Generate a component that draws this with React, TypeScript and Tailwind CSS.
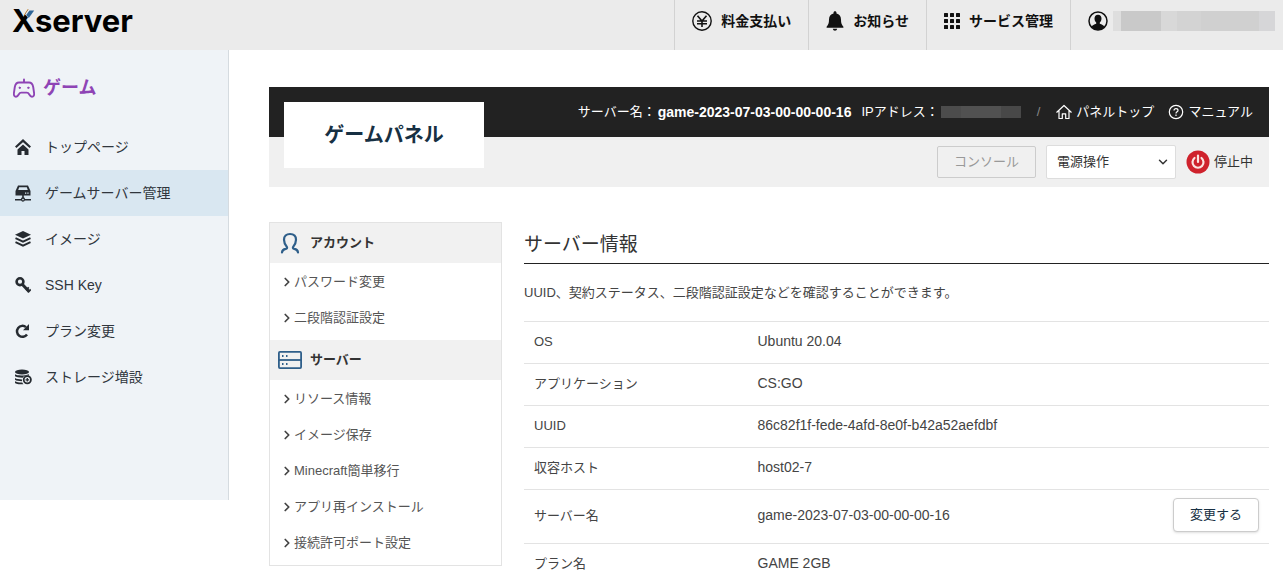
import type { ReactNode } from "react";
import { ChevronDown, ChevronRight } from "lucide-react";
import clsx from "clsx";

/* ---------- icons ---------- */

const YenIcon = () => (
    <svg viewBox="0 0 20 20" className="size-5 shrink-0" fill="none" stroke="currentColor">
        <circle cx="10" cy="10" r="9.2" strokeWidth="1.4" />
        <path d="M5.500 4.800l4.500 5.200 4.500-5.200M10 10v6M5 10h10M5 12.700h10" strokeWidth="1.6" />
    </svg>
);

const BellIcon = () => (
    <svg viewBox="0 0 18 20" className="h-5 w-[18px] shrink-0" fill="currentColor">
        <path d="M9 .3c.9 0 1.500.6 1.500 1.500v.7c2.800.7 4.500 2.900 4.500 6 0 3.800.7 5.300 2.400 7.300v1H.6v-1C2.300 13.800 3 12.300 3 8.500c0-3.100 1.700-5.300 4.500-6v-.7C7.500.9 8.100.3 9 .3z" />
        <path d="M6.800 17.800h4.400c-.2 1.200-1.100 1.900-2.200 1.900s-2-.7-2.200-1.900z" />
    </svg>
);

const GridIcon = () => (
    <svg viewBox="0 0 16 16" className="size-4 shrink-0" fill="currentColor">
        {[0, 6, 12].map((y) =>
            [0, 6, 12].map((x) => <rect key={`${x}-${y}`} x={x} y={y} width="4" height="4" rx="0.5" />)
        )}
    </svg>
);

const UserIcon = () => (
    <svg viewBox="0 0 20 20" className="size-5 shrink-0">
        <circle cx="10" cy="10" r="9" fill="none" stroke="currentColor" strokeWidth="1.5" />
        <path
            d="M10 3.800c2.200 0 3.500 1.500 3.500 3.700 0 1.800-.8 3.300-1.700 4v1.300c2 .7 4 1.300 4.700 3.200A8.700 8.700 0 0110 19a8.700 8.700 0 01-6.500-3c.7-1.900 2.700-2.500 4.700-3.200v-1.300c-.9-.7-1.700-2.200-1.700-4 0-2.200 1.300-3.700 3.500-3.700z"
            fill="currentColor"
        />
    </svg>
);

const GamepadIcon = () => (
    <svg viewBox="0 0 22 20" className="h-5 w-[22px] shrink-0" fill="none" stroke="currentColor" strokeWidth="1.9" strokeLinecap="round" strokeLinejoin="round">
        <path d="M6 4.500h10c2.500 0 3.700 1.800 4.200 4.500l.9 6.200c.3 2-.6 3.500-2.100 3.500-1.200 0-1.900-.7-2.700-2.200-.7-1.300-1.300-1.900-2.500-1.900H8.200c-1.200 0-1.800.6-2.500 1.900-.8 1.500-1.500 2.200-2.700 2.200-1.500 0-2.400-1.500-2.100-3.500L1.800 9C2.300 6.300 3.500 4.500 6 4.500zM11 4.500V1.500" />
        <circle cx="6.700" cy="9.800" r="0.700" fill="currentColor" strokeWidth="1" />
        <circle cx="15.300" cy="9.800" r="0.700" fill="currentColor" strokeWidth="1" />
    </svg>
);

const HomeIcon = () => (
    <svg viewBox="0 0 16 16" className="size-4 shrink-0">
        <path d="M.7 8.300L8 1.600l7.300 6.700" fill="none" stroke="currentColor" strokeWidth="2.2" />
        <path d="M8 5.500l5.500 5V16h-4v-4h-3v4h-4v-5.500z" fill="currentColor" />
    </svg>
);

const NetworkServerIcon = () => (
    <svg viewBox="0 0 16 17" className="h-[17px] w-4 shrink-0">
        <path
            fillRule="evenodd"
            d="M3 .5h10L15.500 6v4.500H.5V6zM4.200 2.300L3.200 5h9.600l-1-2.700zM10 7.500v1.300h1.300V7.500zm2.300 0v1.300h1.300V7.500z"
            fill="currentColor"
        />
        <path d="M8 10v3M0 14.700h6M10 14.700h6" stroke="currentColor" strokeWidth="1.6" />
        <circle cx="8" cy="14.500" r="1.500" fill="none" stroke="currentColor" strokeWidth="1.3" />
    </svg>
);

const LayersIcon = () => (
    <svg viewBox="0 0 16 16" className="size-4 shrink-0">
        <path d="M8 0l8 3.700-8 3.700-8-3.700z" fill="currentColor" />
        <path d="M.5 7.200L8 10.600l7.500-3.400M.5 11.200L8 14.600l7.500-3.400" fill="none" stroke="currentColor" strokeWidth="1.9" />
    </svg>
);

const KeyIcon = () => (
    <svg viewBox="0 0 16 16" className="size-4 shrink-0" fill="none" stroke="currentColor">
        <circle cx="5" cy="4.700" r="3.400" strokeWidth="2.6" />
        <path d="M7.200 7.200l6.800 7.300" strokeWidth="3" />
        <path d="M11 13.200l2.800-2.800M13 15.300l2.800-2.800" strokeWidth="1.8" />
    </svg>
);

const ReloadIcon = () => (
    <svg viewBox="0 0 16 16" className="size-4 shrink-0">
        <path d="M12 11.500A5.500 5.500 0 1111 4.100" fill="none" stroke="currentColor" strokeWidth="2.5" />
        <path d="M14 1v6.300H8z" fill="currentColor" />
    </svg>
);

const StorageIcon = () => (
    <svg viewBox="0 0 17 16" className="h-4 w-[17px] shrink-0">
        <ellipse cx="7" cy="3" rx="7" ry="2.500" fill="currentColor" />
        <path
            d="M0 5.200c2 1.500 9 1.700 14 0v1.500c-3-.5-5.500.5-6.300 2C4 8.700 1 8.200 0 7.300zM0 9c1.500 1 4 1.400 7 1.400v1.800c-3 0-6-.4-7-1.400zM0 12.200c1.500 1 4.500 1.500 7.300 1.400.3.700.7 1.200 1.200 1.700C4.500 15.400.5 15 0 13.700z"
            fill="currentColor"
        />
        <circle cx="12.300" cy="10.800" r="3.600" fill="none" stroke="currentColor" strokeWidth="1.8" />
        <path d="M12.300 9v3.600M10.500 10.800h3.600" stroke="currentColor" strokeWidth="1.3" />
    </svg>
);

const PanelTopIcon = () => (
    <svg viewBox="0 0 16 16" className="size-4 shrink-0" fill="none" stroke="currentColor" strokeWidth="1.2" strokeLinejoin="round">
        <path d="M.8 8.200L8 1.500l7.200 6.700M3 6.500v8h3.300v-4.700h3.400v4.700H13v-8" strokeLinecap="round" />
    </svg>
);

const HelpIcon = () => (
    <svg viewBox="0 0 16 16" className="size-4 shrink-0" fill="none" stroke="currentColor" strokeWidth="1.2">
        <circle cx="8" cy="8" r="6.700" />
        <path d="M6 6.600c0-1.200.8-2 2-2s2 .8 2 1.800c0 1.300-2 1.500-2 3" />
        <path d="M8 10.600v1.300" />
    </svg>
);

const PowerIcon = () => (
    <svg viewBox="0 0 24 24" className="size-6 shrink-0">
        <circle cx="12" cy="12" r="11.500" fill="#cf222c" />
        <path d="M8.500 8a5.500 5.500 0 107 0M12 5.500v6.500" fill="none" stroke="#fbe3e0" strokeWidth="2.2" strokeLinecap="round" />
    </svg>
);

const AccountIcon = () => (
    <svg viewBox="0 0 24 24" className="size-6 shrink-0" fill="none" stroke="#2f5f8a" strokeWidth="2.2" strokeLinecap="round">
        <path d="M4 21.500c.2-2.200 1.500-3.200 3.700-3.600 1.400-.3 1.800-1.100 1-2.200C7.200 13.700 6 11.500 6 8.700 6 5.200 8.300 3 12 3s6 2.200 6 5.700c0 2.800-1.200 5-2.700 7-.8 1.100-.4 1.900 1 2.200 2.200.4 3.500 1.400 3.700 3.600" />
    </svg>
);

const ServerIcon = () => (
    <svg viewBox="0 0 24 24" className="size-6 shrink-0" fill="none" stroke="#2f5f8a" strokeWidth="1.8">
        <rect x="0.900" y="3.900" width="22.200" height="16.200" rx="1" />
        <path d="M1 12h22" />
        <path d="M4 8h1.500M8 8h1.500M4 16h1.500M8 16h1.500" />
    </svg>
);

/* ---------- data ---------- */

const sideItems = [
    { icon: HomeIcon, label: "トップページ" },
    { icon: NetworkServerIcon, label: "ゲームサーバー管理", active: true },
    { icon: LayersIcon, label: "イメージ" },
    { icon: KeyIcon, label: "SSH Key" },
    { icon: ReloadIcon, label: "プラン変更" },
    { icon: StorageIcon, label: "ストレージ増設" },
];

const panelMenu = [
    { icon: AccountIcon, title: "アカウント", items: ["パスワード変更", "二段階認証設定"] },
    {
        icon: ServerIcon,
        title: "サーバー",
        items: ["リソース情報", "イメージ保存", "Minecraft簡単移行", "アプリ再インストール", "接続許可ポート設定"],
    },
];

const serverInfo = [
    { label: "OS", value: "Ubuntu 20.04" },
    { label: "アプリケーション", value: "CS:GO" },
    { label: "UUID", value: "86c82f1f-fede-4afd-8e0f-b42a52aefdbf" },
    { label: "収容ホスト", value: "host02-7" },
    { label: "サーバー名", value: "game-2023-07-03-00-00-00-16", editable: true },
    { label: "プラン名", value: "GAME 2GB" },
];

/* ---------- parts ---------- */

const HeaderLink = ({
    icon,
    className = "gap-[9px] pr-[17px]",
    children,
}: {
    icon: ReactNode;
    className?: string;
    children: ReactNode;
}) => (
    <a
        href="#"
        className={clsx("flex items-center border-l border-[#d2d2d2] pb-2 pl-[17px] text-sm font-bold text-[#111]", className)}
    >
        {icon}
        {children}
    </a>
);

const Header = () => (
    <header className="flex h-[50px] justify-between bg-[#ebebeb]">
        <a
            href="#"
            className="relative self-start pl-3 pt-[3px] font-[Inter] text-[31px] leading-9 font-bold text-black"
        >
            Xserver
            <svg viewBox="0 0 12 12" className="absolute left-[23px] top-[9px] size-3">
                <path d="M5.500 0H12v3L6.500 10 2 5.500z" fill="#ebebeb" />
                <path d="M6.500 1.500h4.700L5.800 9 3.200 6z" fill="#2f6596" />
            </svg>
        </a>
        <nav className="flex">
            <HeaderLink icon={<YenIcon />}>料金支払い</HeaderLink>
            <HeaderLink icon={<BellIcon />}>お知らせ</HeaderLink>
            <HeaderLink icon={<GridIcon />}>サービス管理</HeaderLink>
            <HeaderLink icon={<UserIcon />} className="gap-[5px] pr-2">
                <span className="flex h-5 w-[162px]">
                    <span className="w-2 bg-[#dedede]" />
                    <span className="w-10 bg-[#c9c9c9]" />
                    <span className="w-4 bg-[#d8d8d8]" />
                    <span className="w-6 bg-[#d3d3d3]" />
                    <span className="flex-1 bg-[#d0d0d0]" />
                    <span className="w-4 bg-[#d6d6d8]" />
                </span>
            </HeaderLink>
        </nav>
    </header>
);

const Sidebar = () => (
    <aside className="w-[229px] shrink-0 border-r border-[#d5dbe0] bg-[#eff3f7] pt-6 pb-[100px]">
        <h2 className="mb-[22px] flex h-7 items-center gap-2 pl-[13px] text-lg font-bold text-[#8e44b5]">
            <GamepadIcon />
            ゲーム
        </h2>
        <ul>
            {sideItems.map(({ icon: Icon, label, active }) => (
                <li key={label}>
                    <a
                        href="#"
                        className={clsx("flex h-[46px] items-center pl-[15px] text-sm text-[#30363d]", active && "bg-[#d9e7f1]")}
                    >
                        <span className="flex w-[30px] text-[#262b31]">
                            <Icon />
                        </span>
                        {label}
                    </a>
                </li>
            ))}
        </ul>
    </aside>
);

const PanelHeader = () => (
    <div className="relative">
        <div className="flex h-[50px] items-center justify-end bg-[#222] pr-4 text-[13px] text-white">
            <span>サーバー名：</span>
            <strong className="ml-0.5 mr-2.5 text-sm leading-5">game-2023-07-03-00-00-00-16</strong>
            <span>IPアドレス：</span>
            <span className="ml-0.5 flex h-3 w-20">
                <span className="w-5 bg-[#4c4c4c]" />
                <span className="flex-1 bg-[#515151]" />
                <span className="w-5 bg-[#484848]" />
            </span>
            <span className="mx-4 text-[#888]">/</span>
            <a href="#" className="mr-3.5 flex items-center gap-1">
                <PanelTopIcon />
                パネルトップ
            </a>
            <a href="#" className="flex items-center gap-1">
                <HelpIcon />
                マニュアル
            </a>
        </div>
        <div className="flex h-[50px] items-center justify-end gap-2.5 bg-[#f0f0f0] pr-4 text-[13px] text-[#333]">
            <button type="button" disabled className="h-8 w-[99px] rounded-xs border border-[#ccc] text-[#999]">
                コンソール
            </button>
            <div className="relative">
                <select
                    aria-label="電源操作"
                    className="h-[34px] w-[130px] appearance-none rounded-xs border border-[#ddd] bg-white pl-2.5 pr-7"
                >
                    <option>電源操作</option>
                </select>
                <ChevronDown className="pointer-events-none absolute right-1.5 top-2.5 size-3.5" strokeWidth={2.5} />
            </div>
            <span className="flex items-center gap-1">
                <PowerIcon />
                停止中
            </span>
        </div>
        <h1 className="absolute left-[15px] top-[15px] flex h-[66px] w-[200px] items-center justify-center bg-white text-xl font-bold text-[#173043]">
            ゲームパネル
        </h1>
    </div>
);

const PanelMenu = () => (
    <nav className="w-[233px] shrink-0 border border-[#e3e3e3]">
        {panelMenu.map(({ icon: Icon, title, items }) => (
            <section key={title}>
                <h3 className="flex h-10 items-center gap-2 bg-[#f1f1f1] pl-2 text-[13px] font-bold text-[#333]">
                    <Icon />
                    {title}
                </h3>
                <ul className="pt-px pb-1">
                    {items.map((item) => (
                        <li key={item}>
                            <a href="#" className="flex h-9 items-center pl-2.5 text-[13px] text-[#555]">
                                <ChevronRight className="size-3.5 text-[#444]" strokeWidth={3} />
                                {item}
                            </a>
                        </li>
                    ))}
                </ul>
            </section>
        ))}
    </nav>
);

const ServerInfo = () => (
    <section className="min-w-0 flex-1 text-[#444]">
        <h2 className="border-b border-[#222] pt-[5px] text-[19px] leading-9 text-[#333]">サーバー情報</h2>
        <p className="mt-[19px] mb-[18px] text-[13px] leading-5">
            UUID、契約ステータス、二段階認証設定などを確認することができます。
        </p>
        <table className="w-full border-collapse text-left">
            <tbody>
                {serverInfo.map(({ label, value, editable }) => (
                    <tr key={label} className={clsx("border-t border-[#e3e3e3]", editable ? "h-[54px]" : "h-[42px]")}>
                        <th scope="row" className="w-[30%] px-2.5 pb-px text-[13px] leading-5 font-normal">
                            {label}
                        </th>
                        <td className="px-2.5 pb-[3px]">
                            <div className="flex items-center justify-between text-sm">
                                {value}
                                {editable && (
                                    <button
                                        type="button"
                                        className="h-[34px] w-[86px] rounded border border-[#ccc] bg-white text-[13px] text-[#173043] shadow-sm"
                                    >
                                        変更する
                                    </button>
                                )}
                            </div>
                        </td>
                    </tr>
                ))}
            </tbody>
        </table>
    </section>
);

export default function App() {
    return (
        <div
            className="min-h-screen bg-white font-[family-name:'Liberation_Sans','Noto_Sans_CJK_JP',sans-serif]"
            lang="ja"
        >
            <Header />
            <div className="flex items-start">
                <Sidebar />
                <main className="min-w-0 flex-1 pl-10 pr-3.5 pt-[37px]">
                    <PanelHeader />
                    <div className="mt-[35px] flex items-start gap-[22px]">
                        <PanelMenu />
                        <ServerInfo />
                    </div>
                </main>
            </div>
        </div>
    );
}
